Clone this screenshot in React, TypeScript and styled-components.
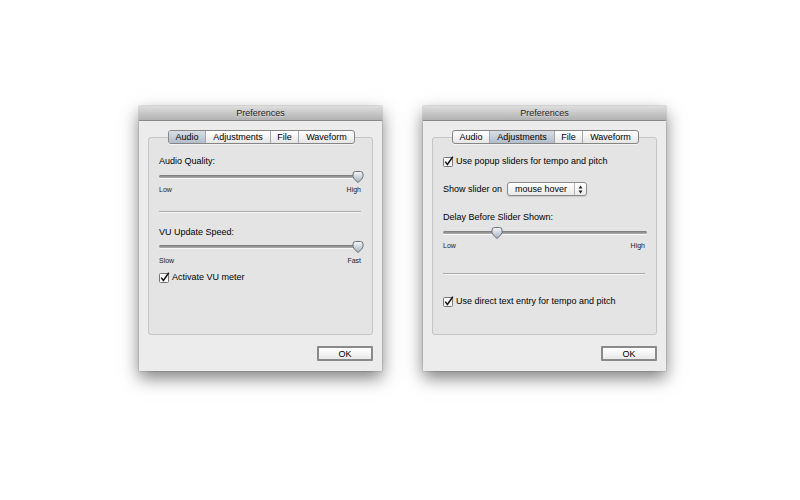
import React from "react"
import styled, { createGlobalStyle } from "styled-components"

const GlobalStyle = createGlobalStyle`
  html, body {
    margin: 0;
    padding: 0;
    background: #ffffff;
  }
  body {
    font-family: "Liberation Sans", Arial, sans-serif;
    color: #000;
  }
`

const Stage = styled.div`
  width: 800px;
  height: 500px;
  box-sizing: border-box;
  padding: 106px 0 0 139px;
  display: flex;
  align-items: flex-start;
  gap: 41px;
`

const Window = styled.div`
  width: 243px;
  height: 265px;
  background: #ececec;
  display: flex;
  flex-direction: column;
  box-shadow: 0 7px 16px rgba(0, 0, 0, 0.5), 0 0 1px rgba(0, 0, 0, 0.55);
`

const TitleBar = styled.div`
  height: 14px;
  line-height: 15px;
  text-align: center;
  font-size: 9px;
  color: #222;
  background: linear-gradient(#dedede, #b2b2b2);
  border-bottom: 1px solid #8a8a8a;
  text-shadow: 0 1px 0 rgba(255, 255, 255, 0.45);
`

const Body = styled.div`
  flex: 1;
  padding: 9px 9px 10px;
  display: flex;
  flex-direction: column;
`

const TabBar = styled.div`
  align-self: center;
  display: flex;
  height: 14px;
  border: 1px solid #858585;
  border-radius: 3px;
  box-sizing: border-box;
  overflow: hidden;
  position: relative;
  z-index: 1;
  margin-left: 2px;
  background: linear-gradient(#ffffff, #e6e6e6);
  box-shadow: 0 1px 0 rgba(255, 255, 255, 0.6);
`

const Tab = styled.div<{ $active?: boolean; $w: number }>`
  width: ${({ $w }) => $w}px;
  text-align: center;
  font-size: 9px;
  line-height: 12px;
  color: #000;
  border-left: 1px solid #a6a6a6;
  background: ${({ $active }) =>
    $active ? "linear-gradient(#d8dee6, #b3bdca)" : "transparent"};
  &:first-child {
    border-left: none;
  }
`

const Panel = styled.div`
  margin-top: -7px;
  height: 198px;
  box-sizing: border-box;
  border: 1px solid #c4c4c4;
  border-radius: 3px;
  background: #e4e4e4;
  padding: 17px 11px 0 10px;
  display: flex;
  flex-direction: column;
`

const Label = styled.div<{ $top?: number }>`
  margin-top: ${({ $top }) => $top ?? 0}px;
  height: 11px;
  line-height: 12px;
  font-size: 9px;
`

const Ticks = styled.div<{ $top?: number }>`
  margin-top: ${({ $top }) => $top ?? 0}px;
  height: 9px;
  line-height: 9px;
  font-size: 7px;
  color: #1a1a1a;
  display: flex;
  justify-content: space-between;
`

const Separator = styled.div<{ $top?: number }>`
  margin-top: ${({ $top }) => $top ?? 0}px;
  height: 1px;
  background: #a9a9a9;
  border-bottom: 1px solid #f4f4f4;
`

const SliderWrap = styled.div<{ $top?: number; $extra?: number }>`
  margin-top: ${({ $top }) => $top ?? 0}px;
  margin-right: ${({ $extra }) => -($extra ?? 0)}px;
  height: 12px;
  position: relative;
`

const Track = styled.div`
  position: absolute;
  left: 0;
  right: 0;
  top: 4px;
  height: 3px;
  border-radius: 2px;
  background: linear-gradient(#777, #b0b0b0);
  box-shadow: 0 1px 0 rgba(255, 255, 255, 0.7);
`

const Thumb = styled.svg`
  position: absolute;
  top: 0;
  width: 12px;
  height: 12px;
  margin-left: -6px;
`

const CheckRow = styled.label<{ $top?: number }>`
  margin-top: ${({ $top }) => $top ?? 0}px;
  display: flex;
  align-items: center;
  gap: 2px;
  height: 12px;
  font-size: 9px;
  line-height: 12px;
`

const PopupRow = styled.div<{ $top?: number }>`
  margin-top: ${({ $top }) => $top ?? 0}px;
  display: flex;
  align-items: center;
  gap: 5px;
  height: 14px;
  font-size: 9px;
`

const Popup = styled.div`
  width: 80px;
  height: 14px;
  box-sizing: border-box;
  border: 1px solid #8a8a8a;
  border-radius: 3px;
  background: linear-gradient(#ffffff, #eaeaea);
  display: flex;
  align-items: center;
  font-size: 9px;
  box-shadow: 0 1px 1px rgba(0, 0, 0, 0.12);
`

const PopupText = styled.span`
  flex: 1;
  padding-left: 7px;
  line-height: 13px;
`

const PopupArrows = styled.div`
  width: 11px;
  height: 100%;
  border-left: 1px solid #b5b5b5;
  display: flex;
  align-items: center;
  justify-content: center;
`

const Footer = styled.div`
  margin-top: 11px;
  display: flex;
  justify-content: flex-end;
`

const OkButton = styled.button`
  width: 56px;
  height: 15px;
  padding: 0;
  box-sizing: border-box;
  border: 2px solid #8a8a8a;
  border-radius: 1px;
  background: linear-gradient(#ffffff, #e9e9e9);
  font-family: "Liberation Sans", Arial, sans-serif;
  font-size: 9px;
  line-height: 12px;
  color: #000;
`

function Slider({ value, top, extra }: { value: number; top: number; extra?: number }) {
  return (
    <SliderWrap $top={top} $extra={extra}>
      <Track />
      <Thumb viewBox="0 0 12 12" style={{ left: `${value * 100}%` }}>
        <defs>
          <linearGradient id="knob" x1="0" y1="0" x2="0" y2="1">
            <stop offset="0" stopColor="#f6f8fb" />
            <stop offset="1" stopColor="#a6b1be" />
          </linearGradient>
        </defs>
        {/* rounded shield knob pointing down */}
        <path
          d="M1 3 Q1 0.5 3.5 0.5 H8.5 Q11 0.5 11 3 V5.5 Q11 7.5 6 11.5 Q1 7.5 1 5.5 Z"
          fill="url(#knob)"
          stroke="#6c7075"
          strokeWidth="1"
        />
      </Thumb>
    </SliderWrap>
  )
}

function CheckBox() {
  return (
    <svg width="11" height="11" viewBox="0 0 11 11">
      <rect x="0.5" y="1.5" width="9" height="9" rx="1" fill="#f7f7f7" stroke="#767676" />
      <path d="M2.2 5.6 L4.4 8.4 L9.8 0.8" fill="none" stroke="#151515" strokeWidth="1.5" />
    </svg>
  )
}

const tabs = [
  { name: "Audio", w: 36 },
  { name: "Adjustments", w: 64 },
  { name: "File", w: 27 },
  { name: "Waveform", w: 55 },
]

function Tabs({ active }: { active: number }) {
  return (
    <TabBar>
      {tabs.map((t, i) => (
        <Tab key={t.name} $w={t.w} $active={i === active}>
          {t.name}
        </Tab>
      ))}
    </TabBar>
  )
}

function PrefsWindow({ active, children }: { active: number; children: React.ReactNode }) {
  return (
    <Window>
      <TitleBar>Preferences</TitleBar>
      <Body>
        <Tabs active={active} />
        <Panel>{children}</Panel>
        <Footer>
          <OkButton>OK</OkButton>
        </Footer>
      </Body>
    </Window>
  )
}

export default function App() {
  return (
    <>
      <GlobalStyle />
      <Stage>
        <PrefsWindow active={0}>
          <Label>Audio Quality:</Label>
          <Slider value={0.985} top={5} />
          <Ticks $top={2}>
            <span>Low</span>
            <span>High</span>
          </Ticks>
          <Separator $top={17} />
          <Label $top={13}>VU Update Speed:</Label>
          <Slider value={0.985} top={4} />
          <Ticks $top={3}>
            <span>Slow</span>
            <span>Fast</span>
          </Ticks>
          <CheckRow $top={6}>
            <CheckBox />
            Activate VU meter
          </CheckRow>
        </PrefsWindow>

        <PrefsWindow active={1}>
          <CheckRow>
            <CheckBox />
            Use popup sliders for tempo and pitch
          </CheckRow>
          <PopupRow $top={15}>
            Show slider on
            <Popup>
              <PopupText>mouse hover</PopupText>
              <PopupArrows>
                <svg width="5" height="9" viewBox="0 0 5 9">
                  <path d="M2.5 0.5 L4.5 3.5 H0.5 Z M2.5 8.5 L4.5 5.5 H0.5 Z" fill="#222" />
                </svg>
              </PopupArrows>
            </Popup>
          </PopupRow>
          <Label $top={15}>Delay Before Slider Shown:</Label>
          <Slider value={0.265} top={5} extra={2} />
          <Ticks $top={2}>
            <span>Low</span>
            <span>High</span>
          </Ticks>
          <Separator $top={23} />
          <CheckRow $top={20}>
            <CheckBox />
            Use direct text entry for tempo and pitch
          </CheckRow>
        </PrefsWindow>
      </Stage>
    </>
  )
}
